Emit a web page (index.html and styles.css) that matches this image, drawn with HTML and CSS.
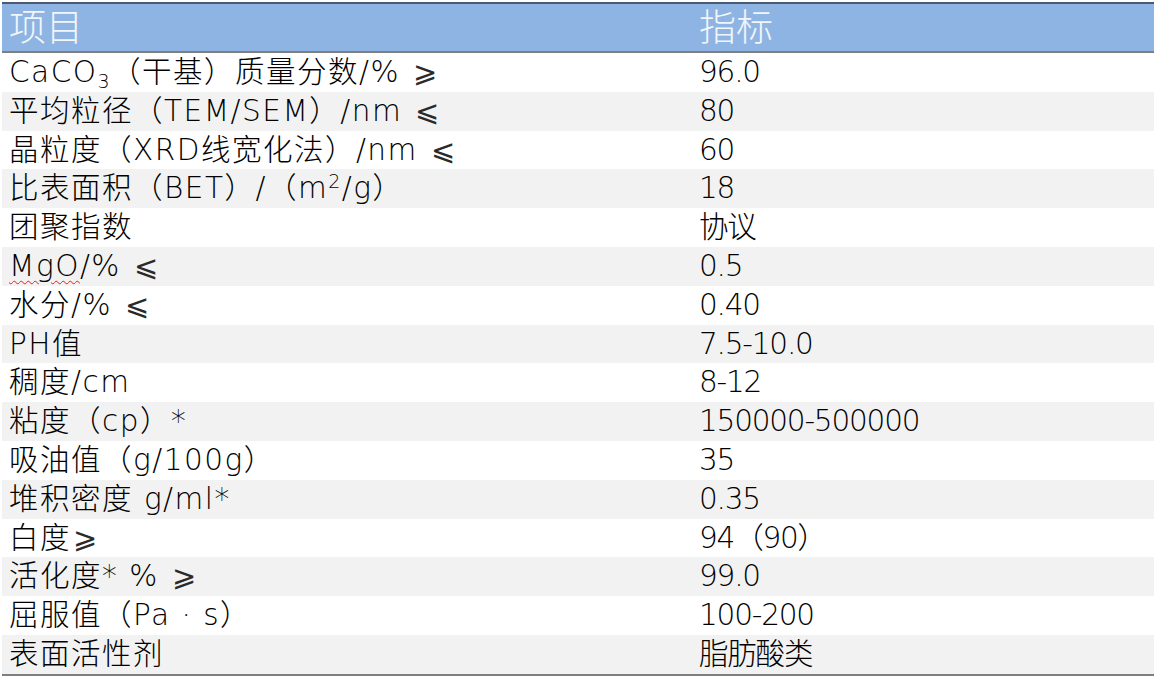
FILE: index.html
```html
<!DOCTYPE html>
<html lang="zh-CN">
<head>
<meta charset="utf-8">
<title>指标表</title>
<link rel="stylesheet" href="styles.css">
</head>
<body>
<div class="sheet">
  <div class="row head"><div class="cell">项目</div><div class="cell">指标</div></div>
  <div class="row"><div class="cell">CaCO<sub>3</sub>（干基）质量分数/% <span class="rel">⩾</span></div><div class="cell">96.0</div></div>
  <div class="row alt"><div class="cell">平均粒径（TEM/SEM）/nm <span class="rel">⩽</span></div><div class="cell">80</div></div>
  <div class="row"><div class="cell">晶粒度（XRD线宽化法）/nm <span class="rel">⩽</span></div><div class="cell">60</div></div>
  <div class="row alt"><div class="cell">比表面积（BET）/（m<sup>2</sup>/g）</div><div class="cell">18</div></div>
  <div class="row"><div class="cell">团聚指数</div><div class="cell">协议</div></div>
  <div class="row alt"><div class="cell"><span class="spell">MgO</span>/% <span class="rel">⩽</span></div><div class="cell">0.5</div></div>
  <div class="row"><div class="cell">水分/% <span class="rel">⩽</span></div><div class="cell">0.40</div></div>
  <div class="row alt"><div class="cell">PH值</div><div class="cell">7.5-10.0</div></div>
  <div class="row"><div class="cell">稠度/cm</div><div class="cell">8-12</div></div>
  <div class="row alt"><div class="cell">粘度（cp）*</div><div class="cell">150000-500000</div></div>
  <div class="row"><div class="cell">吸油值（g/100g）</div><div class="cell">35</div></div>
  <div class="row alt"><div class="cell">堆积密度 g/ml*</div><div class="cell">0.35</div></div>
  <div class="row"><div class="cell">白度<span class="rel">⩾</span></div><div class="cell">94（90）</div></div>
  <div class="row alt"><div class="cell">活化度* % <span class="rel">⩾</span></div><div class="cell">99.0</div></div>
  <div class="row"><div class="cell">屈服值（Pa · s）</div><div class="cell">100-200</div></div>
  <div class="row alt"><div class="cell">表面活性剂</div><div class="cell">脂肪酸类</div></div>
</div>
</body>
</html>
```
FILE: styles.css
```css
html, body {
  margin: 0;
  padding: 0;
  background: #ffffff;
}
body {
  font-family: "DejaVu Sans", "Noto Sans CJK SC", sans-serif;
  font-weight: 300;
  color: #000000;
}
.sheet {
  margin: 2px 1px 0 2px;
  width: 1152px;
  border-top: 2px solid #4a5a74;
  border-bottom: 2px solid #7f7f7f;
}
.row {
  display: grid;
  grid-template-columns: 690px 1fr;
  height: 38.8px;
  font-size: 29.5px;
  line-height: 38.8px;
  background: #ffffff;
  white-space: nowrap;
}
.row.alt {
  background: #f2f2f2;
}
.row.head {
  box-sizing: border-box;
  height: 49px;
  padding-top: 3px;
  line-height: 44px;
  font-size: 37px;
  background: #8eb4e3;
  color: #f2f5fa;
  border-bottom: 2px solid #7f7f7f;
}
.cell {
  padding-left: 7px;
  overflow: hidden;
}
.cell:first-child {
  letter-spacing: 1.5px;
}
.cell:last-child {
  letter-spacing: -1.2px;
}
.row.head .cell {
  letter-spacing: 0;
}
.rel {
  color: #2a2a2a;
  font-size: 29px;
  padding-left: 2px;
}
sub, sup {
  font-size: 19px;
  line-height: 0;
}
sub {
  vertical-align: -6px;
}
sup {
  vertical-align: 10px;
}
.spell {
  text-decoration: underline wavy #e02020;
  text-decoration-thickness: 1px;
  text-underline-offset: 4px;
}
```
